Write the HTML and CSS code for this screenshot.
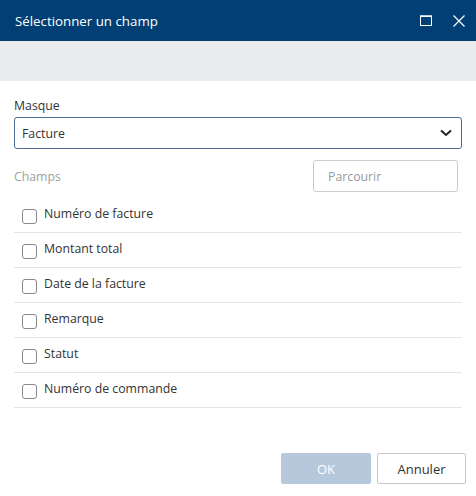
FILE: index.html
```html
<!DOCTYPE html>
<html lang="fr">
<head>
<meta charset="utf-8">
<link rel="stylesheet" href="styles.css">
</head>
<body>
<div class="dialog">
  <div class="titlebar">
    <span class="title">Sélectionner un champ</span>
    <div class="win-btns">
      <svg class="ico-max" width="12" height="11" viewBox="0 0 12 11"><rect x="0.5" y="1" width="11" height="9.5" fill="none" stroke="#fff" stroke-width="1"/><rect x="0" y="0.5" width="12" height="1.5" fill="#fff"/></svg>
      <svg class="ico-close" width="12" height="12" viewBox="0 0 12 12"><path d="M0.5 0.5 L11.5 11.5 M11.5 0.5 L0.5 11.5" stroke="#fff" stroke-width="1.2" fill="none"/></svg>
    </div>
  </div>
  <div class="toolbar"></div>
  <div class="content">
    <div class="label">Masque</div>
    <div class="select">
      <span>Facture</span>
      <svg width="12" height="8" viewBox="0 0 12 8"><path d="M1 1.5 L6 6 L11 1.5" stroke="#222" stroke-width="2" fill="none"/></svg>
    </div>
    <div class="fields-head">
      <span class="muted">Champs</span>
      <div class="search">Parcourir</div>
    </div>
    <div class="list">
      <div class="row"><span class="cb"></span><span>Numéro de facture</span></div>
      <div class="row"><span class="cb"></span><span>Montant total</span></div>
      <div class="row"><span class="cb"></span><span>Date de la facture</span></div>
      <div class="row"><span class="cb"></span><span>Remarque</span></div>
      <div class="row"><span class="cb"></span><span>Statut</span></div>
      <div class="row"><span class="cb"></span><span>Numéro de commande</span></div>
    </div>
  </div>
  <div class="footer">
    <button class="btn btn-ok">OK</button>
    <button class="btn btn-cancel">Annuler</button>
  </div>
</div>
</body>
</html>
```
FILE: styles.css
```css
* { box-sizing: border-box; }
html, body { margin: 0; padding: 0; background: #fff; }
body {
  font-family: "Open Sans", "Noto Sans", sans-serif;
  font-size: 12.3px;
  color: #333;
}
.dialog { width: 476px; height: 496px; display: flex; flex-direction: column; }
.titlebar {
  height: 41px;
  background: #023f74;
  color: #fff;
  display: flex;
  align-items: center;
  justify-content: space-between;
  padding: 0 11px 0 15px;
}
.title { font-size: 13.3px; }
.win-btns { display: flex; align-items: center; gap: 21px; }
.ico-max { display: block; }
.ico-close { display: block; }
.toolbar { height: 40px; background: #ebecee; }
.content { padding: 0 14px 0 14px; flex: 1; }
.label { margin-top: 14px; height: 22px; line-height: 22px; color: #333; }
.select {
  height: 32px;
  border: 1px solid #4d6d94;
  border-radius: 3px;
  display: flex;
  align-items: center;
  justify-content: space-between;
  padding: 0 9px 0 7px;
}
.select svg { display: block; }
.fields-head {
  margin-top: 11px;
  display: flex;
  justify-content: space-between;
  align-items: center;
  padding-right: 4px;
}
.muted { color: #a0a0a0; }
.search {
  width: 145px;
  height: 32px;
  border: 1px solid #ccc;
  border-radius: 3px;
  color: #9a9a9a;
  display: flex;
  align-items: center;
  padding-left: 14px;
}
.list { margin-top: 6px; }
.row {
  height: 35px;
  border-bottom: 1px solid #e3e3e3;
  display: flex;
  align-items: center;
  padding-left: 8px;
  gap: 7px;
  padding-bottom: 4px;
}
.cb {
  width: 15px;
  height: 15px;
  border: 1px solid #888;
  border-radius: 3px;
  margin-top: 6px;
}
.footer {
  display: flex;
  justify-content: flex-end;
  gap: 6px;
  padding: 0 10px 12px 0;
}
.btn {
  font-family: inherit;
  font-size: 13px;
  height: 31px;
  border-radius: 2px;
}
.btn-ok { width: 90px; background: #b5c8dc; border: 1px solid #b5c8dc; color: #fff; }
.btn-cancel { width: 89px; background: #fff; border: 1px solid #c8c8c8; color: #333; }
```
